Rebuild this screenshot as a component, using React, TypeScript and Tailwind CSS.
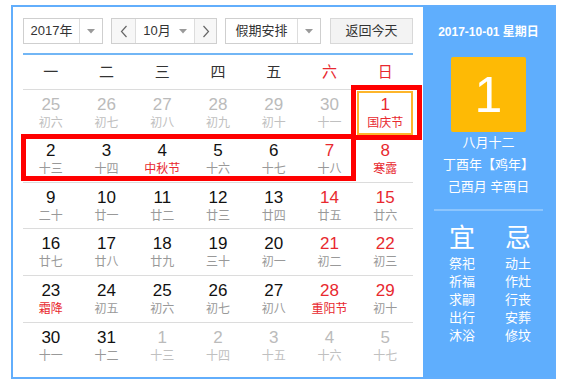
import React from "react";

type Cell = { n: number; l: string; nc: string; lc: string; sel?: boolean };

const BLK = "text-[#111]";
const RED = "text-[#e8292f]";
const GRY = "text-[#bbb]";
const LG = "text-[#999]";
const LGO = "text-[#c0c0c0]";

const c = (n: number, l: string, nc = BLK, lc = LG, sel = false): Cell => ({ n, l, nc, lc, sel });

const rows: Cell[][] = [
  [c(25, "初六", GRY, LGO), c(26, "初七", GRY, LGO), c(27, "初八", GRY, LGO), c(28, "初九", GRY, LGO), c(29, "初十", GRY, LGO), c(30, "十一", GRY, LGO), c(1, "国庆节", RED, RED, true)],
  [c(2, "十三"), c(3, "十四"), c(4, "中秋节", BLK, RED), c(5, "十六"), c(6, "十七"), c(7, "十八", RED), c(8, "寒露", RED, RED)],
  [c(9, "二十"), c(10, "廿一"), c(11, "廿二"), c(12, "廿三"), c(13, "廿四"), c(14, "廿五", RED), c(15, "廿六", RED)],
  [c(16, "廿七"), c(17, "廿八"), c(18, "廿九"), c(19, "三十"), c(20, "初一"), c(21, "初二", RED), c(22, "初三", RED)],
  [c(23, "霜降", BLK, RED), c(24, "初五"), c(25, "初六"), c(26, "初七"), c(27, "初八"), c(28, "重阳节", RED, RED), c(29, "初十", RED)],
  [c(30, "十一"), c(31, "十二"), c(1, "十三", GRY, LGO), c(2, "十四", GRY, LGO), c(3, "十五", GRY, LGO), c(4, "十六", GRY, LGO), c(5, "十七", GRY, LGO)],
];

const rowH = ["h-[46px]", "h-[47px]", "h-[46px]", "h-[47px]", "h-[47px]", "h-[46px]"];

const Tri = () => (
  <svg width="8" height="5" viewBox="0 0 8 5">
    <path d="M0 0 L8 0 L4 4.5 Z" fill="#9a9a9a" />
  </svg>
);

const Chev = ({ dir }: { dir: "l" | "r" }) => (
  <svg width="8" height="13" viewBox="0 0 8 13">
    <polyline
      points={dir === "l" ? "6.5,1 1.5,6.5 6.5,12" : "1.5,1 6.5,6.5 1.5,12"}
      fill="none"
      stroke="#666"
      strokeWidth="1.2"
    />
  </svg>
);

const font = "font-['Liberation_Sans','Noto_Sans_CJK_SC',sans-serif]";

export default function App() {
  return (
    <div className={`relative w-[568px] h-[389px] bg-white ${font}`}>
      <div className="ml-[11px] pt-[5px]">
        <div className="flex w-[545px] h-[374px] border-2 border-[#62aefc]">
          {/* Left */}
          <div className="w-[410px] pt-[11px] px-[10px] flex flex-col">
            {/* toolbar */}
            <div className="flex items-center h-[26px] text-[13px] text-[#333]">
              <div className="flex w-[80px] h-[26px] border border-[#cfcfcf]">
                <div className="w-[55px] flex items-center justify-center">2017年</div>
                <div className="flex-1 border-l border-[#ddd] flex items-center justify-center">
                  <Tri />
                </div>
              </div>
              <div className="ml-[8px] flex w-[106px] h-[26px] border border-[#cfcfcf]">
                <div className="w-[23px] bg-[#f7f7f7] flex items-center justify-center">
                  <Chev dir="l" />
                </div>
                <div className="w-[60px] border-x border-[#ddd] flex items-center justify-center gap-[8px]">
                  <span>10月</span>
                  <Tri />
                </div>
                <div className="flex-1 bg-[#f7f7f7] flex items-center justify-center">
                  <Chev dir="r" />
                </div>
              </div>
              <div className="ml-[8px] flex w-[96px] h-[26px] border border-[#cfcfcf]">
                <div className="w-[71px] flex items-center justify-center">假期安排</div>
                <div className="flex-1 border-l border-[#ddd] flex items-center justify-center">
                  <Tri />
                </div>
              </div>
              <div className="ml-auto w-[83px] h-[26px] border border-[#d8d8d8] bg-[#f3f3f3] flex items-center justify-center">
                返回今天
              </div>
            </div>
            <div className="mt-[9px] h-[2px] bg-[#72b6f5]" />
            {/* weekdays */}
            <div className="grid grid-cols-7 h-[35px] border-b border-[#dcdcdc] text-[15px] text-[#333]">
              {["一", "二", "三", "四", "五", "六", "日"].map((d, i) => (
                <div key={d} className={`flex items-center justify-center ${i >= 5 ? "text-[#e8292f]" : ""}`}>
                  {d}
                </div>
              ))}
            </div>
            {rows.map((r, ri) => (
              <div
                key={ri}
                className={`grid grid-cols-7 ${rowH[ri]} ${ri < 5 ? "border-b border-[#dcdcdc]" : ""}`}
              >
                {r.map((cell, ci) => (
                  <div key={ci} className="relative flex flex-col items-center pt-[5px]">
                    <div className={`text-[17px] leading-[20px] ${cell.nc}`}>{cell.n}</div>
                    <div className={`text-[12px] leading-[16px] ${cell.lc}`}>{cell.l}</div>
                    {cell.sel && (
                      <div className="absolute inset-x-0 top-[1px] bottom-[0px] border-2 border-[#fdb52b]" />
                    )}
                  </div>
                ))}
              </div>
            ))}
          </div>
          {/* Right panel */}
          <div className="flex-1 bg-[#5faefd] flex flex-col items-center text-white">
            <div className="mt-[17px] text-[12px] leading-[16px] font-bold">2017-10-01 星期日</div>
            <div className="mt-[17px] w-[75px] h-[75px] bg-[#feba05] rounded-[2px] flex items-center justify-center text-[50px] leading-none">
              1
            </div>
            <div className="text-[13px] leading-[22px] text-center">
              <div>八月十二</div>
              <div>丁酉年【鸡年】</div>
              <div>己酉月 辛酉日</div>
            </div>
            <div className="mt-[11px] self-stretch mx-[11px] h-[2px] bg-[#8cc5fd]" />
            <div className="self-stretch pl-[11px] flex">
              {[
                ["宜", ["祭祀", "祈福", "求嗣", "出行", "沐浴"]],
                ["忌", ["动土", "作灶", "行丧", "安葬", "修坟"]],
              ].map(([h, items]) => (
                <div key={h as string} className="w-[56px] flex flex-col items-center">
                  <div className="mt-[12px] text-[26px] leading-[30px]">{h as string}</div>
                  <div className="mt-[2px] text-[13px] leading-[18px]">
                    {(items as string[]).map((t) => (
                      <div key={t}>{t}</div>
                    ))}
                  </div>
                </div>
              ))}
            </div>
          </div>
        </div>
      </div>
      {/* annotation boxes */}
      <div className="absolute left-[351px] top-[85px] w-[71px] h-[55px] border-[5px] border-[#ff0000]" />
      <div className="absolute left-[21px] top-[134px] w-[335px] h-[47px] border-[5px] border-[#ff0000]" />
    </div>
  );
}
